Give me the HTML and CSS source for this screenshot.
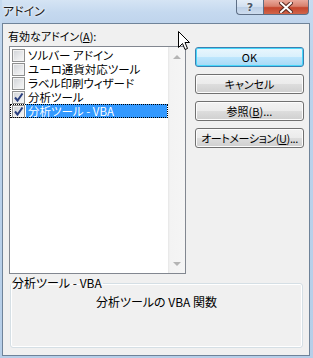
FILE: index.html
```html
<!DOCTYPE html>
<html lang="ja">
<head>
<meta charset="utf-8">
<title>アドイン</title>
<link rel="stylesheet" href="styles.css">
</head>
<body>
<div class="window">
  <div class="titlebar">
    <span class="title">アドイン</span>
    <div class="caption-btns">
      <div class="cbtn help">?</div>
      <div class="cbtn close">
        <svg width="14" height="11" viewBox="0 0 14 11"><path d="M2 1 L12 10 M12 1 L2 10" stroke="#5a2a22" stroke-width="4" stroke-linecap="square"/><path d="M2 1 L12 10 M12 1 L2 10" stroke="#ffffff" stroke-width="2" stroke-linecap="square"/></svg>
      </div>
    </div>
  </div>
  <div class="client">
    <div class="main">
      <div class="left">
        <div class="label">有効なアドイン(<u>A</u>):</div>
        <div class="listbox">
          <ul class="items">
            <li class="item"><span class="cb"></span><span class="txt">ソルバー アドイン</span></li>
            <li class="item"><span class="cb"></span><span class="txt">ユーロ通貨対応ツール</span></li>
            <li class="item"><span class="cb"></span><span class="txt">ラベル印刷ウィザード</span></li>
            <li class="item"><span class="cb checked"><svg width="11" height="11" viewBox="0 0 11 11"><path d="M2 5.5 L4.5 8.5 L9.5 1.5" fill="none" stroke="#2a3f7e" stroke-width="2"/></svg></span><span class="txt">分析ツール</span></li>
            <li class="item selected"><span class="cb checked"><svg width="11" height="11" viewBox="0 0 11 11"><path d="M2 5.5 L4.5 8.5 L9.5 1.5" fill="none" stroke="#2a3f7e" stroke-width="2"/></svg></span><span class="txt">分析ツール - VBA</span></li>
          </ul>
          <div class="scrollbar">
            <span class="arrow up"></span>
            <span class="arrow down"></span>
          </div>
        </div>
      </div>
      <div class="buttons">
        <div class="btn default">OK</div>
        <div class="btn">キャンセル</div>
        <div class="btn">参照(<u>B</u>)...</div>
        <div class="btn tight">オートメーション(<u>U</u>)...</div>
      </div>
    </div>
    <fieldset class="group">
      <legend>分析ツール - VBA</legend>
      <p class="desc">分析ツールの VBA 関数</p>
    </fieldset>
  </div>
  <svg class="cursor" width="13" height="20" viewBox="0 0 13 20"><path d="M0.5 0.5 L0.5 16.5 L4.5 12.5 L7 18.5 L9.5 17.5 L7 11.5 L11.5 11.5 Z" fill="#ffffff" stroke="#000000" stroke-width="1"/></svg>
</div>
</body>
</html>
```

FILE: styles.css
```css
* { box-sizing: border-box; }
html, body { margin: 0; padding: 0; }
body {
  width: 313px;
  height: 358px;
  overflow: hidden;
  font-family: "Noto Sans CJK JP", "Noto Sans", sans-serif;
  font-size: 11.5px;
  font-feature-settings: "palt";
  color: #000;
}
.window {
  position: relative;
  width: 313px;
  height: 358px;
  padding: 0 3px 2px 2px;
  background: linear-gradient(to bottom, #c7dbf0 0px, #bcd3ec 60px, #b6cee8 100%);
  display: flex;
  flex-direction: column;
}
.titlebar {
  height: 23px;
  display: flex;
  justify-content: space-between;
  align-items: flex-start;
  padding-right: 1px;
  background: linear-gradient(to bottom, #d5e4f4 0px, #c5d9ef 12px, #bfd4ec 23px);
}
.title {
  padding: 3px 0 0 1px;
  line-height: 16px;
  font-size: 12px;
  color: #1b1b1b;
  text-shadow: 0 0 4px #ffffff, 0 0 2px #ffffff;
}
.caption-btns {
  display: flex;
  height: 15px;
}
.cbtn {
  height: 15px;
  display: flex;
  align-items: center;
  justify-content: center;
  border: 1px solid #5e6f86;
  border-top: none;
}
.help {
  width: 27px;
  border-right: none;
  border-radius: 0 0 0 4px;
  background: linear-gradient(to bottom, #e4edf7 0%, #d1dff0 50%, #bccfe6 51%, #cddcee 100%);
  color: #4a5666;
  font-family: "DejaVu Sans", sans-serif;
  font-weight: bold;
  font-size: 11px;
  line-height: 13px;
  text-shadow: 0 0 2px #ffffff;
}
.close {
  width: 46px;
  border-radius: 0 0 4px 0;
  background: linear-gradient(to bottom, #e9a99b 0%, #d8806c 45%, #c5452c 55%, #d1654a 100%);
}
.client {
  flex: 1;
  border: 1px solid #6f8399;
  background: #f0f0f0;
  display: flex;
  flex-direction: column;
  padding: 5px 0 7px 0;
}
.main {
  display: flex;
  padding-left: 5px;
  gap: 9px;
}
.left {
  display: flex;
  flex-direction: column;
}
.label {
  font-size: 11px;
  line-height: 14px;
  height: 14px;
  margin-bottom: 3px;
  white-space: nowrap;
}
.listbox {
  margin-left: 1px;
  width: 177px;
  height: 228px;
  border: 1px solid #828790;
  background: #ffffff;
  display: flex;
}
.items {
  list-style: none;
  margin: 0;
  padding: 1px 0 0 0;
  flex: 1;
}
.item {
  display: flex;
  align-items: center;
  height: 14px;
  padding-left: 2px;
  white-space: nowrap;
}
.cb {
  width: 13px;
  height: 13px;
  flex: none;
  border: 1px solid #8e8f8f;
  background: linear-gradient(135deg, #cfd2d6 0%, #e9eaec 60%, #f7f7f7 100%);
  box-shadow: inset 0 0 0 1px #f2f2f2;
  display: flex;
  align-items: center;
  justify-content: center;
}
.cb svg { display: block; }
.txt {
  flex: 1;
  height: 14px;
  line-height: 14px;
  margin-left: 1px;
  margin-right: 1px;
  padding-left: 2px;
}
.selected {
  outline: 1px dotted #000000;
  outline-offset: -1px;
}
.selected .txt {
  background: #3399ff;
  color: #ffffff;
}
.scrollbar {
  width: 17px;
  flex: none;
  background: linear-gradient(to right, #e6e6e6 0px, #f3f3f3 2px, #f5f5f5 100%);
  display: flex;
  flex-direction: column;
  justify-content: space-between;
  align-items: center;
  padding: 8px 0 7px 0;
}
.arrow {
  width: 0;
  height: 0;
  border-left: 4px solid transparent;
  border-right: 4px solid transparent;
}
.arrow.up { border-bottom: 4px solid #b4b4b4; }
.arrow.down { border-top: 4px solid #b4b4b4; }
.buttons {
  margin-top: 18px;
  display: flex;
  flex-direction: column;
  gap: 7px;
}
.btn {
  width: 109px;
  height: 20px;
  border: 1px solid #707070;
  border-radius: 3px;
  background: linear-gradient(to bottom, #f2f2f2 0%, #ebebeb 50%, #dddddd 51%, #cfcfcf 100%);
  box-shadow: inset 0 0 0 1px #fcfcfc;
  text-align: center;
  font-size: 11px;
  line-height: 18px;
  white-space: nowrap;
}
.btn.tight {
  letter-spacing: -0.4px;
}
.btn.default {
  border-color: #3c7fb1;
  box-shadow: inset 0 0 0 1px #48d8fb;
  background: linear-gradient(to bottom, #eaf6fd 0%, #d9f0fc 50%, #bee6fd 51%, #a7d9f5 100%);
}
.group {
  margin: 2px 6px 0 7px;
  padding: 0;
  height: 72px;
  border: 1px solid #d5dfe5;
  border-radius: 3px;
  box-shadow: inset 0 0 0 1px #ffffff;
  min-width: 0;
}
.group legend {
  padding: 0 1px;
  margin-left: 0;
  font-size: 12px;
  line-height: 14px;
}
.desc {
  margin: 5px 0 0 0;
  text-align: center;
  font-size: 12px;
  line-height: 14px;
}
.cursor {
  position: absolute;
  left: 178px;
  top: 31px;
}
```
